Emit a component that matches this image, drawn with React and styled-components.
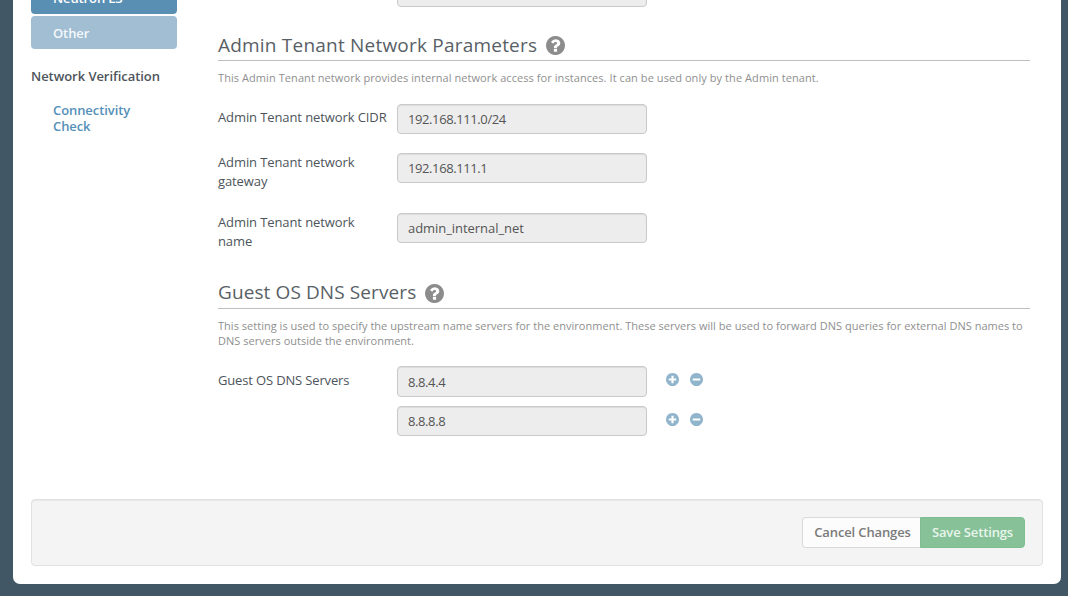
import React from "react";
import styled, { createGlobalStyle } from "styled-components";

const GlobalStyle = createGlobalStyle`
  * { box-sizing: border-box; }
  html, body { margin: 0; height: 100%; overflow: hidden; }
  body {
    background: #415766;
    font-family: "Open Sans", sans-serif;
    font-size: 13px;
    color: #4d545b;
  }
`;

const Page = styled.div`
  height: 596px;
  padding: 0 7px 12px 13px;
  background: #415766;
`;

const Panel = styled.main`
  display: flex;
  flex-direction: column;
  height: 584px;
  padding: 0 18px 18px;
  background: #fff;
  border-radius: 0 0 7px 7px;
  overflow: hidden;
`;

const Columns = styled.div`
  display: flex;
  flex: 1;
  min-height: 0;
`;

const Sidebar = styled.nav`
  width: 146px;
  margin-right: 41px;
  font-weight: 600;
  letter-spacing: -0.05px;
`;

const Pill = styled.div`
  height: 33px;
  margin-top: ${(p) => (p.$active ? "-19px" : "2px")};
  padding-left: 22px;
  line-height: 34px;
  letter-spacing: -0.12px;
  border-radius: 4px;
  color: ${(p) => (p.$active ? "#fff" : "#f4f8fb")};
  background: ${(p) => (p.$active ? "#5a8fb4" : "#a1bed3")};
`;

const GroupTitle = styled.div`
  margin-top: 18px;
  line-height: 18px;
  color: #4d545b;
`;

const SideLink = styled.div`
  margin-top: 17px;
  padding: 0 22px;
  line-height: 16px;
  letter-spacing: -0.08px;
  color: #5490b8;
`;

const Content = styled.section`
  width: 812px;
`;

const HiddenRow = styled.div`
  height: 7px;
  padding-left: 179px;
  overflow: hidden;
`;

const Heading = styled.h3`
  display: flex;
  align-items: center;
  gap: 9px;
  height: 31px;
  margin: ${(p) => p.$top}px 0 0;
  border-bottom: 1px solid #bebebe;
  font-size: 19px;
  font-weight: 400;
  letter-spacing: ${(p) => p.$tracking}px;
  color: #595f66;
`;

const HeadingText = styled.span`
  padding-bottom: ${(p) => p.$lift || 0}px;
`;

const Description = styled.p`
  margin: 9px 0 0;
  font-size: 11px;
  line-height: 15px;
  letter-spacing: ${(p) => p.$tracking}px;
  color: #8f8f8f;
`;

const Row = styled.div`
  display: flex;
  align-items: flex-start;
  margin-top: ${(p) => p.$top}px;
`;

const Label = styled.label`
  width: 179px;
  padding: ${(p) => p.$drop || 0}px 8px 0 0;
  line-height: 19px;
  letter-spacing: ${(p) => p.$tracking || -0.1}px;
`;

const Field = styled.input`
  display: block;
  width: 250px;
  height: ${(p) => p.$height || 30}px;
  margin: ${(p) => p.$shift || 0}px 0 0;
  padding: 0 10px;
  border: 1px solid #c9c9c9;
  border-radius: 4px;
  background: #ededed;
  box-shadow: inset 0 1px 1px rgba(0, 0, 0, 0.075);
  color: #555;
  font: 13px "Open Sans", sans-serif;
  letter-spacing: ${(p) => (p.$numeric ? -0.4 : -0.05)}px;
  outline: 0;
`;

const FieldStack = styled.div`
  display: flex;
  flex-direction: column;
  gap: 9px;
`;

const FieldLine = styled.div`
  display: flex;
`;

const Actions = styled.div`
  display: flex;
  gap: 11px;
  padding: 7px 0 0 19px;
`;

const Icon = styled.svg`
  display: block;
  flex: none;
  width: ${(p) => p.$size}px;
  height: ${(p) => p.$size}px;
  fill: ${(p) => p.$color};
`;

const Footer = styled.footer`
  display: flex;
  justify-content: flex-end;
  align-items: flex-start;
  height: 67px;
  padding: 17px 17px 0;
  border: 1px solid #e1e1e1;
  border-radius: 4px;
  background: #f4f4f4;
  box-shadow: inset 0 1px 1px rgba(0, 0, 0, 0.05);
`;

const Button = styled.button`
  width: ${(p) => (p.$primary ? 105 : 118)}px;
  height: 31px;
  padding: 0 0 2px ${(p) => (p.$primary ? 0 : 2)}px;
  border: 1px solid ${(p) => (p.$primary ? "#7fbe91" : "#dadada")};
  border-right-width: ${(p) => (p.$primary ? 1 : 0)}px;
  border-radius: ${(p) => (p.$primary ? "0 4px 4px 0" : "4px 0 0 4px")};
  background: ${(p) => (p.$primary ? "#86c197" : "#fcfcfc")};
  color: ${(p) => (p.$primary ? "#e9f5ec" : "#7a7a7a")};
  font: 600 13px "Open Sans", sans-serif;
  letter-spacing: -0.13px;
  white-space: nowrap;
`;

const CIRCLE =
  "M1664 896q0 209-103 385.5t-279.5 279.5-385.5 103-385.5-103-279.5-279.5-103-385.5 103-385.5 279.5-279.5 385.5-103 385.5 103 279.5 279.5 103 385.5z";

const MARKS = {
  help: "M1024 1376v-192q0-14-9-23t-23-9h-192q-14 0-23 9t-9 23v192q0 14 9 23t23 9h192q14 0 23-9t9-23zM1280 704q0-88-55.5-163t-138.5-116-170-41q-243 0-371 213-15 24 8 42l132 100q7 6 19 6 16 0 25-12 53-68 86-92 34-24 86-24 48 0 85.5 26t37.5 59q0 38-20 61t-68 45q-63 28-115.5 86.5t-52.5 125.5v36q0 14 9 23t23 9h192q14 0 23-9t9-23q0-19 21.5-49.5t54.5-49.5q32-18 49-28.5t46-35 44.5-48 28-60.5 12.5-81z",
  add: "M1344 960v-128q0-26-19-45t-45-19h-256v-256q0-26-19-45t-45-19h-128q-26 0-45 19t-19 45v256h-256q-26 0-45 19t-19 45v128q0 26 19 45t45 19h256v256q0 26 19 45t45 19h128q26 0 45-19t19-45v-256h256q26 0 45-19t19-45z",
  remove:
    "M1344 960v-128q0-26-19-45t-45-19h-768q-26 0-45 19t-19 45v128q0 26 19 45t45 19h768q26 0 45-19t19-45z",
};

function CircleIcon({ mark, size, color }) {
  return (
    <Icon viewBox="128 128 1536 1536" $size={size} $color={color} aria-hidden="true">
      <path d={CIRCLE} />
      <path d={MARKS[mark]} fill="#fff" />
    </Icon>
  );
}

function SectionHeading({ top, tracking, lift, children }) {
  return (
    <Heading $top={top} $tracking={tracking}>
      <HeadingText $lift={lift}>{children}</HeadingText>
      <CircleIcon mark="help" size={19} color="#8c8c8c" />
    </Heading>
  );
}

function DnsLine({ value, height }) {
  return (
    <FieldLine>
      <Field defaultValue={value} $height={height} $numeric />
      <Actions>
        <CircleIcon mark="add" size={13} color="#91b4cd" />
        <CircleIcon mark="remove" size={13} color="#91b4cd" />
      </Actions>
    </FieldLine>
  );
}

export default function App() {
  return (
    <Page>
      <GlobalStyle />
      <Panel>
        <Columns>
          <Sidebar>
            <Pill $active>Neutron L3</Pill>
            <Pill>Other</Pill>
            <GroupTitle>Network Verification</GroupTitle>
            <SideLink>Connectivity Check</SideLink>
          </Sidebar>
          <Content>
            <HiddenRow>
              <Field defaultValue="" $shift={-23} />
            </HiddenRow>
            <SectionHeading top={23} tracking={0.21}>Admin Tenant Network Parameters</SectionHeading>
            <Description $tracking={0.07}>
              This Admin Tenant network provides internal network access for instances. It can be used only by the Admin tenant.
            </Description>
            <Row $top={19}>
              <Label $drop={4}>Admin Tenant network CIDR</Label>
              <Field defaultValue="192.168.111.0/24" $numeric />
            </Row>
            <Row $top={19}>
              <Label>Admin Tenant network gateway</Label>
              <Field defaultValue="192.168.111.1" $numeric />
            </Row>
            <Row $top={22}>
              <Label>Admin Tenant network name</Label>
              <Field defaultValue="admin_internal_net" />
            </Row>
            <SectionHeading top={27} tracking={0.1} lift={2}>Guest OS DNS Servers</SectionHeading>
            <Description $tracking={0.025}>
              This setting is used to specify the upstream name servers for the environment. These servers will be used to forward DNS queries for external DNS names to DNS servers outside the environment.
            </Description>
            <Row $top={18}>
              <Label $drop={5} $tracking={-0.15}>Guest OS DNS Servers</Label>
              <FieldStack>
                <DnsLine value="8.8.4.4" height={31} />
                <DnsLine value="8.8.8.8" height={30} />
              </FieldStack>
            </Row>
          </Content>
        </Columns>
        <Footer>
          <Button>Cancel Changes</Button>
          <Button $primary>Save Settings</Button>
        </Footer>
      </Panel>
    </Page>
  );
}
